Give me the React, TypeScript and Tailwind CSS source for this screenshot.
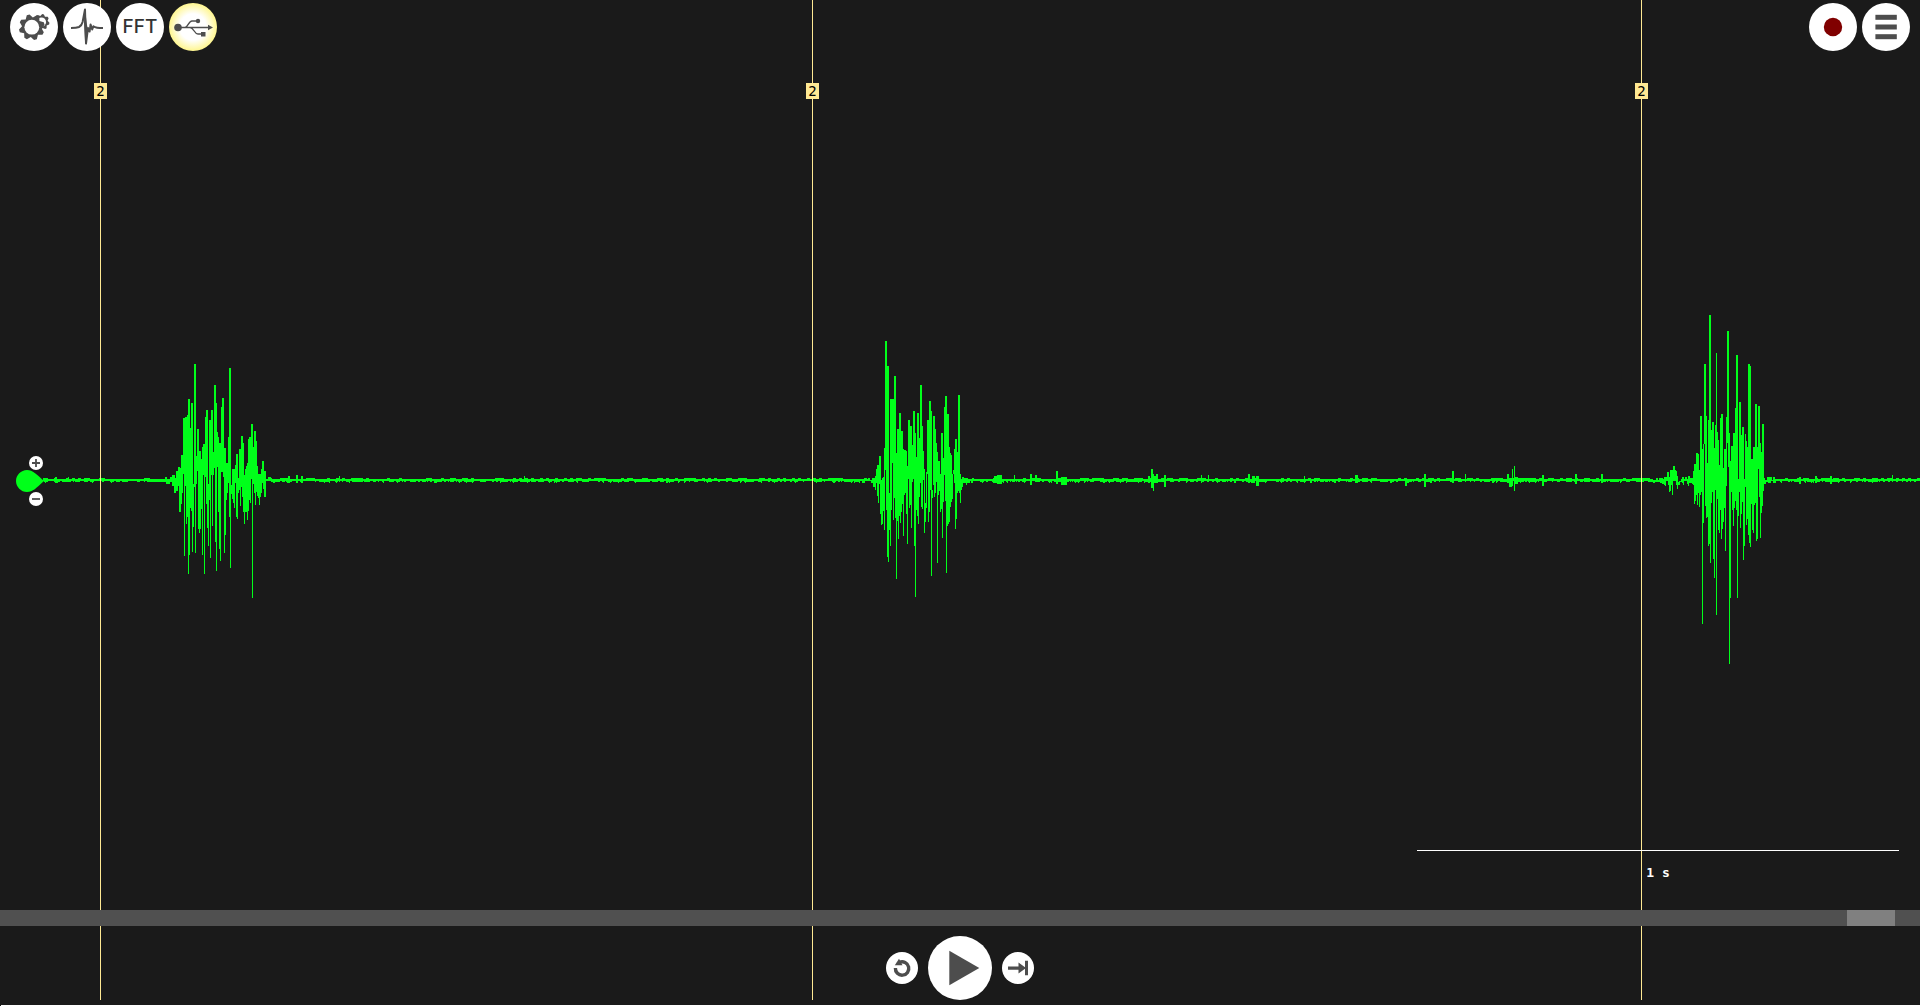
import React from "react";

type Pair = [number, number];

interface Burst {
  x: number;
  y: number;
  width: number;
  top: string;
  bottom: string;
}

const VIEW_WIDTH = 1920;
const BASELINE = 480;
const LINE_START = 43;

/* Burst envelopes: "position:level" steps, three units to a pixel, from the burst's own corner. */
const UNITS = 3;

const BURSTS: Burst[] = [
  {
    x: 150,
    y: 350,
    width: 130,
    top: "0:387 45:381 51:387 60:381 66:375 75:384 78:363 84:351 90:354 93:315 99:204 105:201 111:195 114:147 120:234 123:159 129:402 132:42 138:318 141:237 147:303 153:327 156:291 159:282 165:201 168:180 174:402 177:210 183:180 189:306 192:105 198:159 201:246 204:261 207:279 213:171 216:144 222:294 228:339 234:261 237:54 243:405 246:357 255:345 258:312 264:384 267:297 273:258 279:279 282:375 285:357 288:348 291:339 294:267 297:261 303:222 309:291 312:243 318:273 321:348 324:372 333:357 336:333 342:363 348:387 354:381 363:384 366:387",
    bottom:
      "0:396 39:396 48:402 60:396 66:408 72:429 78:423 84:408 87:486 93:462 96:429 99:372 102:618 105:408 108:522 111:501 114:672 117:615 120:474 123:483 126:606 129:531 132:411 135:609 138:402 141:363 144:537 147:549 150:537 153:477 156:615 159:375 162:672 165:381 168:462 171:534 174:588 177:450 180:624 183:375 186:528 189:375 192:354 195:576 198:663 201:351 204:486 207:597 210:633 213:366 219:381 222:609 225:555 228:450 231:429 234:399 237:501 240:654 243:432 246:447 249:459 252:474 255:399 258:501 261:507 264:429 267:420 270:468 273:411 276:441 279:486 282:522 285:486 291:510 294:483 297:450 300:459 303:387 306:744 309:402 312:429 315:465 318:426 321:438 324:444 327:465 330:441 333:429 336:399 339:417 342:441 348:393 363:396 369:399 375:396",
  },
  {
    x: 860,
    y: 330,
    width: 120,
    top: "0:447 12:444 21:447 24:444 30:450 36:444 45:438 48:417 51:405 57:378 63:450 66:444 69:441 72:354 75:33 81:108 87:489 90:207 102:138 108:369 111:297 117:249 123:303 129:357 132:360 138:363 141:408 144:270 150:288 156:345 159:243 165:309 168:381 171:249 177:324 180:165 186:288 189:363 192:417 195:519 198:426 201:270 207:213 213:243 216:480 219:258 225:297 228:339 231:366 234:393 240:432 243:309 249:384 252:231 255:198 261:252 267:351 270:369 273:375 276:432 279:420 282:357 285:327 291:366 294:195 300:432 303:447 306:441 312:444 324:447 336:444 342:447",
    bottom:
      "0:453 6:459 15:453 33:459 39:471 45:480 48:459 51:498 54:519 57:462 60:552 63:585 66:582 69:543 72:600 75:420 78:540 81:681 84:696 87:600 90:648 93:540 96:399 99:570 102:504 105:564 108:747 111:573 114:627 117:558 120:579 123:546 126:522 129:618 132:495 135:489 138:552 141:642 144:447 147:534 150:525 153:594 156:457 159:447 162:648 165:801 168:540 171:558 174:582 177:501 180:459 183:531 186:537 189:450 192:609 195:576 198:534 201:432 204:576 207:546 210:480 213:738 216:504 219:465 222:501 225:489 228:456 231:699 234:495 237:483 240:546 243:537 246:624 249:516 252:435 255:513 258:729 261:588 264:582 267:576 270:531 273:516 276:507 279:432 282:459 285:597 288:567 291:489 294:483 297:489 300:519 303:480 306:471 309:459 318:465 321:459 330:453 333:459 339:453",
  },
  {
    x: 1650,
    y: 300,
    width: 130,
    top: "0:537 9:540 18:534 24:540 27:534 39:537 42:531 51:516 57:531 60:510 69:498 75:510 78:513 81:528 84:546 87:543 93:537 96:531 102:537 105:531 111:537 114:528 120:534 129:513 132:492 138:459 144:462 147:510 150:348 156:447 159:432 162:192 168:348 171:489 174:360 177:45 183:390 186:366 192:444 195:375 198:159 201:396 204:420 207:495 210:354 213:342 219:504 222:447 228:351 231:93 237:399 240:483 243:438 249:399 255:324 258:165 264:537 267:306 273:405 276:381 282:537 285:402 288:423 291:441 294:192 300:198 303:477 309:441 315:312 321:441 324:318 330:429 333:456 336:372 342:534 345:540 351:531 366:540 369:531 375:537",
    bottom:
      "0:546 9:549 15:546 30:549 36:552 42:555 45:558 48:543 54:555 57:576 60:573 63:555 66:585 69:543 78:555 81:567 84:555 90:546 96:549 99:555 102:543 111:552 114:558 117:549 126:552 129:555 132:612 135:603 138:585 141:615 144:579 147:621 150:585 153:576 156:972 159:669 162:432 165:618 168:654 171:651 174:738 177:732 180:789 183:609 186:576 189:777 192:834 195:570 198:945 201:597 204:690 207:699 210:630 213:717 216:687 219:666 222:624 225:753 228:558 231:429 234:501 237:1092 240:894 243:576 246:630 249:678 252:624 255:603 258:630 261:894 264:648 267:576 270:684 273:642 276:606 279:780 282:738 285:561 288:675 291:657 294:705 297:729 300:741 303:612 306:690 309:699 312:615 315:609 318:723 321:717 324:507 327:591 330:714 333:639 336:618 339:573 342:552 348:546 354:549 363:543 369:549 378:543",
  },
];

/* Small deflections between the bursts: x, rise, fall, width. */
const BLIPS: [number, number, number, number][] = [
  [55, 3, 3, 2],
  [68, 3, 1, 1],
  [288, 4, 3, 2],
  [296, 5, 3, 2],
  [301, 4, 3, 2],
  [339, 4, 2, 1],
  [524, 4, 1, 1],
  [994, 4, 3, 3],
  [997, 5, 4, 5],
  [1014, 5, 2, 1],
  [1030, 6, 5, 2],
  [1035, 5, 2, 2],
  [1056, 9, 4, 2],
  [1061, 3, 5, 6],
  [1148, 4, 3, 2],
  [1151, 11, 8, 2],
  [1153, 6, 11, 1],
  [1154, 4, 3, 2],
  [1156, 6, 3, 2],
  [1164, 5, 7, 2],
  [1201, 5, 3, 1],
  [1208, 5, 2, 1],
  [1248, 6, 3, 2],
  [1252, 4, 3, 3],
  [1256, 4, 6, 3],
  [1304, 4, 3, 1],
  [1355, 5, 3, 3],
  [1405, 1, 6, 2],
  [1424, 6, 7, 2],
  [1452, 9, 3, 2],
  [1465, 6, 2, 1],
  [1507, 6, 3, 2],
  [1509, 2, 7, 3],
  [1512, 11, 6, 1],
  [1514, 14, 11, 1],
  [1515, 3, 4, 3],
  [1542, 5, 6, 2],
  [1575, 6, 4, 2],
  [1601, 6, 3, 2],
  [1799, 3, 4, 2],
  [1815, 4, 3, 2],
  [1830, 4, 4, 2],
  [1892, 5, 2, 1],
];

const parse = (steps: string): Pair[] =>
  steps.split(" ").map((s) => s.split(":").map(Number) as Pair);

const levelAt = (steps: Pair[], at: number) => {
  let level = steps[0][1];
  for (const [pos, value] of steps) {
    if (pos > at) break;
    level = value;
  }
  return level;
};

const noise = (n: number) => {
  const v = Math.sin(n * 127.1 + 11.7) * 43758.5453;
  return v - Math.floor(v);
};

const buildWave = () => {
  const parts: string[] = [];
  const column = (x: number, top: number, bottom: number, width = 1) =>
    parts.push(`M${x} ${top}h${width}V${bottom}h${-width}z`);

  for (let x = LINE_START; x < VIEW_WIDTH; x++) {
    if (BURSTS.some((b) => x >= b.x && x < b.x + b.width)) continue;
    const up = noise(Math.floor(x / 3)) > 0.6 ? 2 : 1;
    const down = noise(Math.floor(x / 2) + 4000) > 0.5 ? 2 : 1;
    const dip = noise(x + 9000) > 0.86 ? 1 : 0;
    column(x, BASELINE - up, BASELINE + down + dip);
  }
  for (const [x, rise, fall, width] of BLIPS) {
    column(x, BASELINE - rise, BASELINE + fall, width);
  }
  for (const burst of BURSTS) {
    const top = parse(burst.top);
    const bottom = parse(burst.bottom);
    for (let i = 0; i < burst.width; i++) {
      const a = Math.round(levelAt(top, i * UNITS) / UNITS);
      const b = Math.round(levelAt(bottom, i * UNITS) / UNITS);
      column(burst.x + i, burst.y + Math.min(a, b - 1), burst.y + b);
    }
  }
  return parts.join("");
};

const WAVE = buildWave();

const gear = (cx: number, cy: number, outer: number, inner: number, teeth: number, turn: number) => {
  const pts: string[] = [];
  const step = (Math.PI * 2) / teeth;
  for (let i = 0; i < teeth; i++) {
    const a = turn + i * step;
    const put = (angle: number, r: number) =>
      pts.push(`${(cx + Math.cos(angle) * r).toFixed(2)},${(cy + Math.sin(angle) * r).toFixed(2)}`);
    put(a - step * 0.14, outer);
    put(a + step * 0.14, outer);
    put(a + step * 0.5, inner);
  }
  return pts.join(" ");
};

const GearIcon = () => (
  <svg viewBox="0 0 48 48" className="size-12" fill="#4d4d4d" aria-hidden="true">
    <polygon points={gear(31.5, 19, 8, 6.2, 8, 0.2)} />
    <circle cx="31.5" cy="19" r="4.6" fill="#fff" />
    <polygon points={gear(21.8, 24.2, 13, 9.8, 8, 0.5)} />
    <circle cx="21.8" cy="24.2" r="7.4" fill="#fff" />
  </svg>
);

const PulseIcon = () => (
  <svg viewBox="0 0 48 48" className="size-12" aria-hidden="true">
    <path
      d="M8 25C12 25 14 24.800 16 24C18 23 19 21.500 19.600 19L22 6.500L23 40.500L25 25L26.600 28.500L27.600 21.500L29.200 26.500L30.400 23.300C32 24.300 35 25 40 25"
      fill="none"
      stroke="#4d4d4d"
      strokeWidth="2"
      strokeLinejoin="round"
    />
    <path d="M21 20L22 6L24 22L25 27L23 41L22 38z" fill="#4d4d4d" />
  </svg>
);

const UsbIcon = () => (
  <svg viewBox="0 0 48 48" className="size-12" fill="#4d4d4d" aria-hidden="true">
    <circle cx="9" cy="24.500" r="3.800" />
    <path
      d="M9 24.500H40M16 24.500C19 24.500 19.500 18 23 18H29M21 24.500C25 24.500 25 31 29 31H34"
      fill="none"
      stroke="#4d4d4d"
      strokeWidth="1.400"
    />
    <circle cx="29" cy="18" r="2.200" />
    <rect x="32" y="29" width="4.500" height="4.500" />
    <path d="M39 21.800L44 24.500L39 27.200z" />
  </svg>
);

const RecordIcon = () => (
  <svg viewBox="0 0 48 48" className="size-12" aria-hidden="true">
    <circle cx="24" cy="24" r="9.200" fill="#800000" />
  </svg>
);

const MenuIcon = () => (
  <svg viewBox="0 0 48 48" className="size-12" fill="#4d4d4d" aria-hidden="true">
    <rect x="13.400" y="11.800" width="21.400" height="5" />
    <rect x="13.400" y="21.500" width="21.400" height="5" />
    <rect x="13.400" y="31.200" width="21.400" height="5" />
  </svg>
);

const RewindIcon = () => (
  <svg viewBox="0 0 32 32" className="size-8" aria-hidden="true">
    <path d="M9.400 16A6.700 6.700 0 1 0 13.500 10.300" fill="none" stroke="#4d4d4d" strokeWidth="3.400" />
    <path d="M8.800 13.200L13 6.800L16.500 13.200z" fill="#4d4d4d" />
  </svg>
);

const PlayIcon = () => (
  <svg viewBox="0 0 64 64" className="size-16" aria-hidden="true">
    <path d="M21.300 14.700L51.300 32L21.300 49.300z" fill="#4d4d4d" />
  </svg>
);

const SkipIcon = () => (
  <svg viewBox="0 0 32 32" className="size-8" fill="#4d4d4d" aria-hidden="true">
    <path d="M6 14.400H16.500V10.400L23 15.200V8.700H26V23.300H23V16.800L16.500 21.600V17.800H6z" />
  </svg>
);

const RoundButton = ({
  label,
  glow = false,
  children,
}: {
  label: string;
  glow?: boolean;
  children: React.ReactNode;
}) => (
  <button
    type="button"
    aria-label={label}
    className={
      glow
        ? "flex size-12 items-center justify-center rounded-full bg-[radial-gradient(circle_closest-side,#ffffff_55%,#fff68f_100%)]"
        : "flex size-12 items-center justify-center rounded-full bg-white"
    }
  >
    {children}
  </button>
);

const MARKERS = [
  { at: 100, label: "2" },
  { at: 812, label: "2" },
  { at: 1641, label: "2" },
];

const Marker = ({ at, label }: { at: number; label: string }) => (
  <div className="absolute top-0 bottom-[6px] w-px" style={{ left: `${(at / VIEW_WIDTH) * 100}%` }}>
    <div className="h-full w-px bg-[#ffe993]" />
    <span className="absolute top-[83px] -left-[6px] h-4 w-[13px] bg-[#ffe993] text-center font-['DejaVu_Sans_Mono',monospace] text-sm leading-4 text-black">
      {label}
    </span>
  </div>
);

const ChannelHandle = () => (
  <div className="absolute inset-y-0 left-4 flex flex-col justify-center pt-[2px]">
    <button type="button" aria-label="Increase gain" className="ml-[13px] size-[14px] rounded-full bg-white">
      <svg viewBox="0 0 14 14" className="size-[14px]" aria-hidden="true">
        <path d="M3 7H11M7 3V11" stroke="#4d4d4d" strokeWidth="1.800" />
      </svg>
    </button>
    <svg viewBox="0 0 28 22" className="h-[22px] w-7" role="img" aria-label="Channel 1">
      <path d="M11 0C5 0 0 5 0 11S5 22 11 22C17 22 20 18 28 11C20 4 17 0 11 0z" fill="#00ff1a" />
    </svg>
    <button type="button" aria-label="Decrease gain" className="ml-[13px] size-[14px] rounded-full bg-white">
      <svg viewBox="0 0 14 14" className="size-[14px]" aria-hidden="true">
        <path d="M3 7H11" stroke="#4d4d4d" strokeWidth="1.800" />
      </svg>
    </button>
  </div>
);

export default function App() {
  return (
    <div className="relative flex min-h-screen flex-col overflow-hidden bg-[#1a1a1a] font-['Inter',sans-serif]">
      {MARKERS.map((m) => (
        <Marker key={m.at} {...m} />
      ))}

      <header className="relative z-10 flex h-[50px] items-start justify-between px-[10px] pt-[3px]">
        <div className="flex gap-[5px]">
          <RoundButton label="Settings">
            <GearIcon />
          </RoundButton>
          <RoundButton label="Threshold view">
            <PulseIcon />
          </RoundButton>
          <RoundButton label="FFT">
            <span className="text-[19px] leading-6 font-medium text-[#333333]">FFT</span>
          </RoundButton>
          <RoundButton label="USB device" glow>
            <UsbIcon />
          </RoundButton>
        </div>
        <div className="flex gap-[5px]">
          <RoundButton label="Record">
            <RecordIcon />
          </RoundButton>
          <RoundButton label="Menu">
            <MenuIcon />
          </RoundButton>
        </div>
      </header>

      <main className="flex flex-1 flex-col">
        <section className="flex flex-1 items-center" aria-label="Signal">
          <svg
            viewBox="0 280 1920 400"
            preserveAspectRatio="none"
            className="h-[400px] w-full"
            shapeRendering="crispEdges"
            role="img"
            aria-label="Recorded signal"
          >
            <path d={WAVE} fill="#00ff1a" />
          </svg>
        </section>
      </main>

      <div className="pointer-events-none absolute inset-x-0 top-[50px] bottom-24">
        <ChannelHandle />
        <div className="absolute right-[21px] bottom-[27px] w-1/4 min-w-[482px] border-t border-white pt-3 text-center font-['DejaVu_Sans_Mono',monospace] text-[13px] leading-5 font-bold text-white">
          1 s
        </div>
      </div>

      <input
        type="range"
        aria-label="Position in recording"
        min={0}
        max={1872}
        defaultValue={1847}
        className="relative z-10 m-0 block h-4 w-full appearance-none bg-[#505050] [&::-webkit-slider-thumb]:h-4 [&::-webkit-slider-thumb]:w-12 [&::-webkit-slider-thumb]:appearance-none [&::-webkit-slider-thumb]:rounded-none [&::-webkit-slider-thumb]:bg-[#808080]"
      />

      <footer className="flex items-center justify-center gap-[10px] pt-[10px] pb-[5px]">
        <button type="button" aria-label="Back" className="size-8 rounded-full bg-white">
          <RewindIcon />
        </button>
        <button type="button" aria-label="Play" className="size-16 rounded-full bg-white">
          <PlayIcon />
        </button>
        <button type="button" aria-label="Jump to end" className="size-8 rounded-full bg-white">
          <SkipIcon />
        </button>
      </footer>
      <div className="ml-px h-px bg-white" />
    </div>
  );
}
